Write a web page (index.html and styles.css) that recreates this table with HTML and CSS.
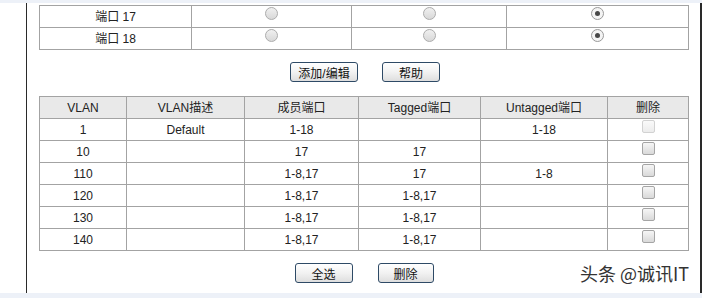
FILE: index.html
```html
<!DOCTYPE html>
<html lang="zh-CN">
<head>
  <meta charset="UTF-8">
  <meta name="viewport" content="width=device-width, initial-scale=1.0">
  <title>VLAN 设置</title>
  <link rel="stylesheet" href="styles.css">
</head>
<body>
  <div class="top-bar"></div>

  <div class="frame">
    <div class="content">
      <!-- 端口成员模式 -->
      <table class="grid port-table">
        <colgroup>
          <col style="width:152px"><col style="width:160px"><col style="width:155px"><col>
        </colgroup>
        <tr>
          <td>端口 17</td>
          <td><span class="radio"></span></td>
          <td><span class="radio"></span></td>
          <td><span class="radio checked"></span></td>
        </tr>
        <tr>
          <td>端口 18</td>
          <td><span class="radio"></span></td>
          <td><span class="radio"></span></td>
          <td><span class="radio checked"></span></td>
        </tr>
      </table>

      <div class="btn-row">
        <button class="btn btn-wide">添加/编辑</button>
        <button class="btn">帮助</button>
      </div>

      <!-- VLAN 列表 -->
      <table class="grid vlan-table">
        <colgroup>
          <col style="width:87px"><col style="width:118px"><col style="width:114px"><col style="width:122px"><col style="width:127px"><col>
        </colgroup>
        <tr class="head">
          <th>VLAN</th><th>VLAN描述</th><th>成员端口</th><th>Tagged端口</th><th>Untagged端口</th><th>删除</th>
        </tr>
        <tr><td>1</td><td>Default</td><td>1-18</td><td></td><td>1-18</td><td><span class="check disabled"></span></td></tr>
        <tr><td>10</td><td></td><td>17</td><td>17</td><td></td><td><span class="check"></span></td></tr>
        <tr><td>110</td><td></td><td>1-8,17</td><td>17</td><td>1-8</td><td><span class="check"></span></td></tr>
        <tr><td>120</td><td></td><td>1-8,17</td><td>1-8,17</td><td></td><td><span class="check"></span></td></tr>
        <tr><td>130</td><td></td><td>1-8,17</td><td>1-8,17</td><td></td><td><span class="check"></span></td></tr>
        <tr><td>140</td><td></td><td>1-8,17</td><td>1-8,17</td><td></td><td><span class="check"></span></td></tr>
      </table>

      <div class="btn-row btn-row-bottom">
        <button class="btn">全选</button>
        <button class="btn btn-del">删除</button>
      </div>
    </div>
  </div>

  <div class="bottom-bar"></div>

  <div class="watermark">头条 @诚讯IT</div>
</body>
</html>
```

FILE: styles.css
```css
body {
  font-family: "Liberation Sans", "Noto Sans CJK SC", sans-serif;
  font-size: 12px;
  color: #222;
  margin: 0;
  padding: 0;
  width: 702px;
  height: 298px;
  overflow: hidden;
  position: relative;
  background-color: #fff;
}

/* 上下浅色边条 */
.top-bar {
  height: 3px;
  background-color: #edf1f8;
}

.bottom-bar {
  height: 5px;
  background-color: #edf1f8;
}

/* 主框架 */
.frame {
  height: 290px;
  margin-left: 26px;
  border-left: 1px solid #2a2a2a;
  border-right: 2px solid #2a2a2a;
}

.content {
  padding: 2px 11px 0 12px;
}

/* 表格 */
.grid {
  width: 650px;
  border-collapse: collapse;
  table-layout: fixed;
}

.grid td,
.grid th {
  border: 1px solid #a3a3a3;
  height: 21px;
  line-height: 14px;
  padding: 0;
  text-align: center;
  vertical-align: middle;
  font-weight: normal;
}

.grid .head th {
  background-color: #e9e9e9;
}

/* 单选按钮 */
.radio {
  display: inline-block;
  width: 11px;
  height: 11px;
  border: 1px solid #adadad;
  border-radius: 50%;
  background: linear-gradient(#f0f0f0, #d8d8d8);
  position: relative;
  top: -2px;
}

.radio.checked {
  background: #f4f4f4;
  border-color: #9a9a9a;
}

.radio.checked::after {
  content: "";
  position: absolute;
  left: 3px;
  top: 3px;
  width: 5px;
  height: 5px;
  border-radius: 50%;
  background-color: #474747;
}

/* 复选框 */
.check {
  display: inline-block;
  width: 11px;
  height: 11px;
  border: 1px solid #a5a5a5;
  border-radius: 2px;
  background: linear-gradient(#f6f6f6, #d9d9d9);
  position: relative;
  top: -2px;
}

.check.disabled {
  border-color: #d2d2d2;
  background: linear-gradient(#fafafa, #ececec);
}

/* 按钮 */
.btn-row {
  display: flex;
  justify-content: center;
  gap: 24px;
  margin: 12px 0 14px;
  padding-left: 2px;
}

.btn-row-bottom {
  margin-top: 12px;
  padding-left: 0;
  gap: 25px;
}

.btn {
  width: 58px;
  height: 20px;
  padding: 0;
  font-family: "Liberation Sans", "Noto Sans CJK SC", sans-serif;
  font-size: 12px;
  color: #111;
  border: 1px solid #2e4a66;
  border-radius: 3px;
  background: linear-gradient(#ffffff, #f2f2f2 50%, #dedede);
}

.btn-wide {
  width: 68px;
}

.btn-del {
  width: 56px;
}

/* 水印 */
.watermark {
  position: absolute;
  left: 580px;
  top: 260px;
  font-family: "Noto Sans CJK SC", sans-serif;
  font-size: 18px;
  color: #333;
  text-shadow: 0 0 2px #fff, 0 0 3px #fff;
}
```
